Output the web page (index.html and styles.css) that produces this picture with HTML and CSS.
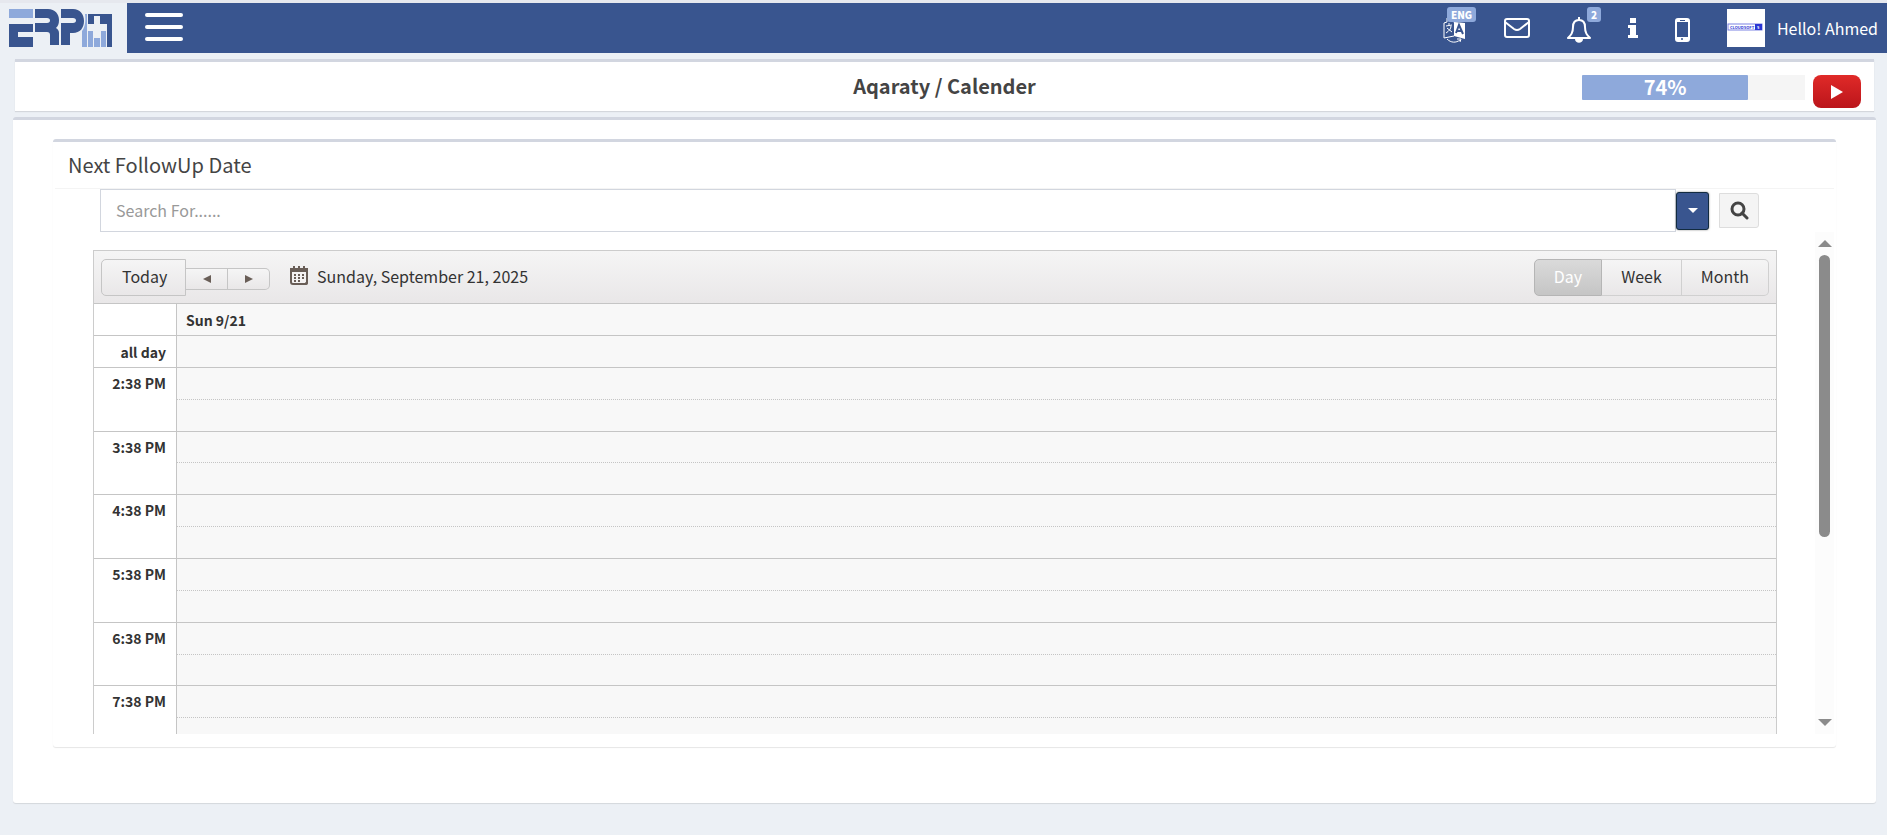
FILE: index.html
```html
<!DOCTYPE html>
<html lang="en">
<head>
    <meta charset="UTF-8">
    <meta name="viewport" content="width=device-width, initial-scale=1.0">
    <title>Aqaraty / Calender</title>
    <link rel="stylesheet" href="styles.css">
</head>
<body>
    <header class="main-header">
        <a class="logo" href="#" aria-label="ERP">
            <svg width="105" height="38" viewBox="0 0 105 38">
                <path fill="#8ea9db" d="M0 0h24v9H0z"/>
                <path fill="#39558f" d="M0 15h24v8H9v5h15v10H0z"/>
                <path fill="#39558f" fill-rule="evenodd" d="M26 0h13c7 0 11 5 11 11 0 4-1 6-3 8 2 1 3 3 3 5v12h-9V26c0-2-1-3-3-3H26v-9h12c4 0 4-5 0-5H26z"/>
                <path fill="#39558f" d="M52 0h12c7 0 11 5 11 12s-4 12-11 12h-3v12h-9V14h12c4 0 4-5 0-5H52z"/>
                <path fill="#8ea9db" d="M73 22c3-4 4-10 3-17h2v33h-5zM79 22h5v16h-5zM85 29h6v9h-6zM92 22h5v16h-5z"/>
                <path fill="#39558f" d="M79 5h24v33h-5V5z"/>
                <path fill="#39558f" d="M79 5h19v11H79z"/>
                <path fill="#ecf0f5" d="M85 7h6v8h7v7h-7v7h-6v-7h-7v-7h7z"/>
            </svg>
        </a>
        <nav class="navbar">
            <button class="sidebar-toggle" aria-label="Toggle navigation">
                <span></span><span></span><span></span>
            </button>
            <ul class="nav-menu">
                <li class="language">
                    <a href="#">
                        <svg width="24" height="26" viewBox="0 0 24 26">
                            <path fill="none" stroke="#fff" d="M11 5L4 1v4L1 6v15l10-2M3 9l6-1M6 6v2M8 9c0 3-2 5-5 7M4 11l5 4"/>
                            <path fill="#fff" d="M11 5l11 1v16l-11-3z"/>
                            <path fill="none" stroke="#39558f" stroke-width="2" d="M13 16l3-8 4 9M14 14h4"/>
                            <path fill="none" stroke="#fff" d="M4 22c4 4 9 4 13 1M14 22l4 0-1 3"/>
                        </svg>
                        <span class="label">ENG</span>
                    </a>
                </li>
                <li class="messages">
                    <a href="#" aria-label="Messages">
                        <svg width="26" height="22" viewBox="0 0 26 22">
                            <rect x="1" y="2" width="24" height="18" rx="2" fill="none" stroke="#fff" stroke-width="2"/>
                            <path fill="none" stroke="#fff" stroke-width="2" d="M1 5l9 7q3 2 6 0l9-7"/>
                        </svg>
                    </a>
                </li>
                <li class="notifications">
                    <a href="#" aria-label="Notifications">
                        <svg width="24" height="26" viewBox="0 0 24 26">
                            <path fill="none" stroke="#fff" stroke-width="2" stroke-linejoin="round" d="M12 3c-4 0-6 3-6 7 0 6-2 8-5 11h22c-3-3-5-5-5-11 0-4-2-7-6-7z"/>
                            <path fill="#fff" d="M11 0h2v3h-2zM8 22h8c0 5-8 5-8 0z"/>
                        </svg>
                        <span class="label">2</span>
                    </a>
                </li>
                <li class="info">
                    <a href="#" aria-label="Info">
                        <svg width="10" height="20" viewBox="0 0 10 20">
                            <path fill="#fff" d="M2 0h6v5H2zM0 7h8v10h2v3H0v-3h2v-7H0z"/>
                        </svg>
                    </a>
                </li>
                <li class="mobile">
                    <a href="#" aria-label="Mobile">
                        <svg width="15" height="24" viewBox="0 0 15 24">
                            <path fill="#fff" fill-rule="evenodd" d="M3 0h9q3 0 3 3v18q0 3-3 3H3q-3 0-3-3V3q0-3 3-3zM2 4v15h11V4zM5 2v1h5V2z"/>
                            <circle cx="7" cy="21" r="1" fill="#39558f"/>
                        </svg>
                    </a>
                </li>
                <li class="user">
                    <a href="#">
                        <svg class="user-image" width="38" height="38" viewBox="0 0 38 38">
                            <path fill="#fff" d="M0 0h38v38H0z"/>
                            <rect x="1" y="15" width="34" height="6" fill="#fff" stroke="#7d83e3"/>
                            <path fill="#2a35d3" d="M28 15h7v6h-7z"/>
                            <text x="3" y="20" class="brand-text">CLOUDSOFT</text>
                            <text x="30" y="20" class="brand-number">5</text>
                        </svg>
                        <span>Hello! Ahmed</span>
                    </a>
                </li>
            </ul>
        </nav>
    </header>

    <section class="content-header">
        <h1>Aqaraty / Calender</h1>
        <div class="header-tools">
            <div class="progress">
                <div class="progress-bar" style="width: 74.5%">74%</div>
            </div>
            <a class="video-link" href="#" aria-label="Watch video">
                <svg width="12" height="14" viewBox="0 0 12 14"><path fill="#fff" d="M0 0l12 7-12 7z"/></svg>
            </a>
        </div>
    </section>

    <main class="content">
        <section class="box">
            <div class="box-header">
                <h3>Next FollowUp Date</h3>
            </div>
            <form class="search-form">
                <input type="text" placeholder="Search For......" aria-label="Search For">
                <button type="button" class="dropdown-btn" aria-label="Search options"><span class="caret"></span></button>
                <button type="button" class="search-btn" aria-label="Search">
                    <svg width="19" height="19" viewBox="0 0 19 19">
                        <circle cx="8" cy="8" r="6" fill="none" stroke="#444" stroke-width="3"/>
                        <path stroke="#444" stroke-width="3" stroke-linecap="round" d="M12 12l5 5"/>
                    </svg>
                </button>
            </form>
            <div class="scroll-area">
                <div class="scheduler">
                    <div class="scheduler-toolbar">
                        <button class="today">Today</button>
                        <button class="arrow prev" aria-label="Previous"><svg width="8" height="8" viewBox="0 0 8 8"><path fill="#695e57" d="M8 0v8L0 4z"/></svg></button>
                        <button class="arrow next" aria-label="Next"><svg width="8" height="8" viewBox="0 0 8 8"><path fill="#695e57" d="M0 0v8l8-4z"/></svg></button>
                        <a class="current-date" href="#">
                            <svg width="18" height="20" viewBox="0 0 18 20">
                                <rect x="1" y="3" width="16" height="15" rx="2" fill="#f4f2f2" stroke="#695e57" stroke-width="2"/>
                                <path fill="#695e57" d="M0 2h18v4H0zM3 0h2v3H3zM8 0h2v3H8zM13 0h2v3h-2z"/>
                                <path stroke="#695e57" stroke-width="2" stroke-dasharray="2 2" d="M4 9h11M4 12h11M4 15h6"/>
                                <path fill="#695e57" d="M13 19l5-5v3q0 2-2 2z"/>
                            </svg>
                            <span>Sunday, September 21, 2025</span>
                        </a>
                        <div class="views">
                            <button class="active">Day</button>
                            <button>Week</button>
                            <button>Month</button>
                        </div>
                    </div>
                    <table class="scheduler-table">
                        <thead>
                            <tr><td></td><th scope="col">Sun 9/21</th></tr>
                            <tr><th scope="row">all day</th><td></td></tr>
                        </thead>
                        <tbody>
                            <tr><th scope="row" rowspan="2">2:38 PM</th><td></td></tr>
                            <tr><td class="half"></td></tr>
                            <tr><th scope="row" rowspan="2">3:38 PM</th><td></td></tr>
                            <tr><td class="half"></td></tr>
                            <tr><th scope="row" rowspan="2">4:38 PM</th><td></td></tr>
                            <tr><td class="half"></td></tr>
                            <tr><th scope="row" rowspan="2">5:38 PM</th><td></td></tr>
                            <tr><td class="half"></td></tr>
                            <tr><th scope="row" rowspan="2">6:38 PM</th><td></td></tr>
                            <tr><td class="half"></td></tr>
                            <tr><th scope="row" rowspan="2">7:38 PM</th><td></td></tr>
                            <tr><td class="half"></td></tr>
                        </tbody>
                    </table>
                </div>
                <div class="scrollbar">
                    <span class="scroll-up"></span>
                    <div class="scroll-track"><div class="scroll-thumb"></div></div>
                    <span class="scroll-down"></span>
                </div>
            </div>
        </section>
    </main>
</body>
</html>
```

FILE: styles.css
```css
* {
    box-sizing: border-box;
}
body {
    margin: 0;
    background-color: #ecf0f5;
    color: #333;
    font-family: "Noto Sans CJK SC", "Open Sans", sans-serif;
    font-size: 16px;
    line-height: 24px;
}
button, input {
    font: inherit;
}
a {
    color: inherit;
    text-decoration: none;
}
svg {
    display: block;
}

/* top bar */
.main-header {
    display: flex;
    height: 53px;
    border-top: 3px solid #e6e8ee;
}
.logo {
    width: 127px;
    padding: 6px 0 0 9px;
}
.navbar {
    display: flex;
    flex: 1;
    align-items: center;
    justify-content: space-between;
    padding: 0 9px 0 18px;
    background-color: #39558f;
}
.sidebar-toggle {
    display: flex;
    flex-direction: column;
    gap: 8px;
    padding: 0 0 2px;
    border: none;
    background: none;
    cursor: pointer;
}
.sidebar-toggle span {
    width: 38px;
    height: 4px;
    border-radius: 2px;
    background-color: #fff;
}
.nav-menu {
    display: flex;
    align-items: center;
    gap: 37px;
    margin: 0;
    padding: 0;
    list-style: none;
    color: #fff;
}
.nav-menu li {
    position: relative;
}
.nav-menu .language, .nav-menu .notifications, .nav-menu .mobile {
    padding-top: 4px;
}
.label {
    position: absolute;
    top: -6px;
    left: 4px;
    height: 15px;
    padding: 0 4px;
    border-radius: 3px;
    background-color: #8ea9db;
    font-size: 10px;
    font-weight: 900;
    line-height: 15px;
}
.notifications .label {
    left: 20px;
}
.user a {
    display: flex;
    align-items: center;
    gap: 12px;
}
.brand-text, .brand-number {
    font-size: 4px;
    font-weight: bold;
    fill: #2a35d3;
}
.brand-number {
    fill: #fff;
}

/* page title */
.content-header {
    display: flex;
    position: relative;
    justify-content: center;
    height: 52px;
    margin: 6px 13px 6px 15px;
    padding-top: 12px;
    border-top: 3px solid #d2d6e0;
    background-color: #fff;
    box-shadow: 0 1px 1px rgba(0, 0, 0, 0.1);
}
.content-header h1 {
    margin: 0;
    color: #444;
    font-size: 20px;
    font-weight: bold;
    line-height: 24px;
}
.header-tools {
    display: flex;
    position: absolute;
    top: 13px;
    right: 13px;
    gap: 8px;
}
.progress {
    width: 223px;
    height: 25px;
    background-color: #f5f5f5;
}
.progress-bar {
    height: 25px;
    border-radius: 1px;
    background-color: #8ea9db;
    color: #fff;
    font-size: 20px;
    font-weight: bold;
    line-height: 24px;
    text-align: center;
}
.video-link {
    display: flex;
    align-items: center;
    justify-content: center;
    width: 48px;
    height: 33px;
    border-radius: 8px;
    background: linear-gradient(#e02a28, #bb151b);
}

/* content */
.content {
    margin: 0 11px 32px 13px;
    padding: 19px 40px 56px;
    border-top: 3px solid #d2d6e0;
    border-radius: 3px;
    background-color: #fff;
    box-shadow: 0 1px 1px rgba(0, 0, 0, 0.1);
}
.box {
    padding: 0 2px 13px;
    border-top: 3px solid #d2d6e0;
    border-radius: 3px;
    box-shadow: 0 1px 1px rgba(0, 0, 0, 0.1);
}
.box-header {
    height: 47px;
    padding: 11px 13px;
    border-bottom: 1px solid #f4f4f4;
}
.box-header h3 {
    margin: 0;
    color: #444;
    font-size: 20px;
    font-weight: normal;
    line-height: 24px;
}
.search-form {
    display: flex;
    align-items: center;
    padding: 0 75px 0 45px;
}
.search-form input {
    flex: 1;
    height: 43px;
    padding: 5px 15px 7px;
    border: 1px solid #d2d6de;
    color: #555;
}
.search-form input::placeholder {
    color: #999;
}
.search-form button {
    display: flex;
    align-items: center;
    justify-content: center;
    padding: 0;
    cursor: pointer;
}
.dropdown-btn {
    width: 33px;
    height: 38px;
    border: 1px solid #122b40;
    border-radius: 3px;
    background-color: #39558f;
    box-shadow: 0 0 2px rgba(0, 0, 0, 0.5);
}
.caret {
    border-top: 5px solid #fff;
    border-right: 5px solid transparent;
    border-left: 5px solid transparent;
}
.search-btn {
    width: 40px;
    height: 35px;
    margin-left: 10px;
    border: 1px solid #ddd;
    border-radius: 0 3px 3px 0;
    background-color: #f4f4f4;
}
.scroll-area {
    display: flex;
    height: 502px;
    overflow: hidden;
}

/* scheduler */
.scheduler {
    flex: 1;
    align-self: flex-start;
    margin: 18px 38px 0;
    border: 1px solid #ccc;
}
.scheduler-toolbar {
    display: flex;
    align-items: center;
    height: 52px;
    padding: 0 7px;
    background: linear-gradient(#f5f5f5, #e9e7e8);
}
.scheduler-toolbar button {
    height: 37px;
    padding: 0 20px 2px;
    border: 1px solid #c5c5c5;
    background: linear-gradient(#f5f5f5, #e9e7e8);
    color: #333;
    cursor: pointer;
}
.scheduler-toolbar .today {
    width: 85px;
    border-radius: 5px 0 0 5px;
}
.scheduler-toolbar .arrow {
    display: flex;
    align-items: center;
    justify-content: center;
    width: 42px;
    height: 22px;
    margin-top: 3px;
    padding: 0;
    border-left: none;
}
.scheduler-toolbar .next {
    border-radius: 0 5px 5px 0;
}
.current-date {
    display: flex;
    align-items: center;
    gap: 9px;
    margin-left: 20px;
    padding-bottom: 2px;
}
.views {
    display: flex;
    margin-left: auto;
}
.scheduler-toolbar .views button {
    padding: 0 19px 2px;
    border-color: #d0d0d0;
    border-left: none;
}
.scheduler-toolbar .views button:last-child {
    border-radius: 0 5px 5px 0;
}
.scheduler-toolbar .views .active {
    border: 1px solid #b5b5b5;
    border-radius: 5px 0 0 5px;
    background: linear-gradient(#dadada, #c5c5c5);
    color: #fff;
}
.scheduler-table {
    width: 100%;
    border-spacing: 0;
    table-layout: fixed;
    font-size: 14px;
    line-height: 20px;
}
.scheduler-table th, .scheduler-table td {
    height: 32px;
    padding: 6px 9px 0;
    border-top: 1px solid #c5c5c5;
    text-align: left;
    vertical-align: top;
}
.scheduler-table tbody th {
    padding-top: 5px;
}
.scheduler-table tbody tr:nth-child(7n+3) td {
    height: 31px;
}
.scheduler-table tr > :first-child {
    width: 82px;
}
.scheduler-table th[scope="row"] {
    padding-right: 10px;
    text-align: right;
}
.scheduler-table th[scope="col"], .scheduler-table th + td, .scheduler-table .half {
    border-left: 1px solid #c5c5c5;
    background-color: #f8f8f8;
}
.scheduler-table .half {
    border-top-style: dotted;
}

/* scrollbar */
.scrollbar {
    display: flex;
    flex-direction: column;
    align-items: center;
    gap: 8px;
    width: 19px;
    padding: 8px 0;
    background-color: #fcfcfc;
}
.scroll-up, .scroll-down {
    border-right: 7px solid transparent;
    border-left: 7px solid transparent;
}
.scroll-up {
    border-bottom: 7px solid #8b8b8b;
}
.scroll-down {
    border-top: 7px solid #8b8b8b;
}
.scroll-track {
    flex: 1;
}
.scroll-thumb {
    width: 11px;
    height: 282px;
    border-radius: 6px;
    background-color: #8b8b8b;
}
```
